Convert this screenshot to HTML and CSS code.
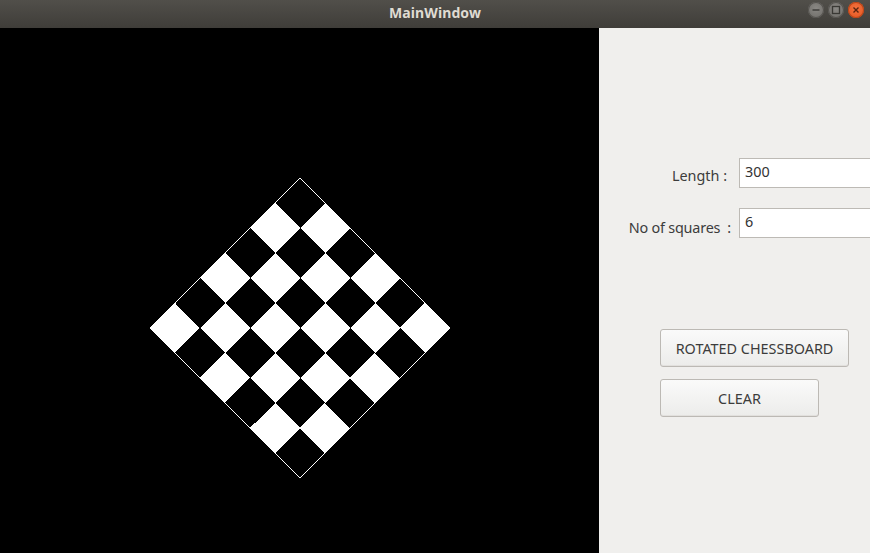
FILE: index.html
```html
<!DOCTYPE html>
<html>
<head>
<meta charset="utf-8">
<link rel="stylesheet" href="styles.css">
</head>
<body>
<div class="window">
  <div class="titlebar">
    <span class="title">MainWindow</span>
    <div class="controls">
      <span class="ctl ctl-min"><svg width="16" height="16" viewBox="0 0 16 16"><line x1="4.5" y1="8" x2="11.5" y2="8" stroke="#3a3935" stroke-width="1.4"/></svg></span>
      <span class="ctl ctl-max"><svg width="16" height="16" viewBox="0 0 16 16"><rect x="4.5" y="4.5" width="7" height="7" fill="none" stroke="#3a3935" stroke-width="1.3"/></svg></span>
      <span class="ctl ctl-close"><svg width="16" height="16" viewBox="0 0 16 16"><path d="M5.5 5.5 L10.5 10.5 M10.5 5.5 L5.5 10.5" stroke="#5a2410" stroke-width="1.4"/></svg></span>
    </div>
  </div>
  <div class="main">
    <div class="canvas">
      <svg id="board" width="599" height="525" viewBox="0 0 599 525" shape-rendering="crispEdges"></svg>
    </div>
    <div class="panel">
      <div class="form">
        <div class="row">
          <label class="lbl">Length :</label>
          <div class="field">300</div>
        </div>
        <div class="row">
          <label class="lbl lbl-low">No of squares&nbsp;&nbsp;:</label>
          <div class="field">6</div>
        </div>
      </div>
      <div class="buttons">
        <button class="btn btn-wide">ROTATED CHESSBOARD</button>
        <button class="btn btn-narrow">CLEAR</button>
      </div>
    </div>
  </div>
</div>
<script>
(function(){
  var svg = document.getElementById('board');
  var ns = 'http://www.w3.org/2000/svg';
  var n = 6, L = 300, s = L / Math.SQRT2 / n;
  var g = document.createElementNS(ns, 'g');
  g.setAttribute('transform', 'translate(300,150) rotate(45)');
  for (var i = 0; i < n; i++) {
    for (var j = 0; j < n; j++) {
      if ((i + j) % 2 === 1) {
        var r = document.createElementNS(ns, 'rect');
        r.setAttribute('x', j * s);
        r.setAttribute('y', i * s);
        r.setAttribute('width', s);
        r.setAttribute('height', s);
        r.setAttribute('fill', '#fff');
        g.appendChild(r);
      }
    }
  }
  var o = document.createElementNS(ns, 'rect');
  o.setAttribute('x', 0); o.setAttribute('y', 0);
  o.setAttribute('width', s * n); o.setAttribute('height', s * n);
  o.setAttribute('fill', 'none'); o.setAttribute('stroke', '#fff');
  o.setAttribute('stroke-width', '1');
  g.appendChild(o);
  svg.appendChild(g);
})();
</script>
</body>
</html>
```

FILE: styles.css
```css
* { box-sizing: border-box; }
html, body { margin: 0; padding: 0; }
body {
  width: 870px;
  height: 553px;
  overflow: hidden;
  font-family: "Noto Sans", "DejaVu Sans", sans-serif;
  background: #efeeec;
}
.window {
  display: flex;
  flex-direction: column;
  width: 870px;
  height: 553px;
}
.titlebar {
  position: relative;
  height: 28px;
  flex: none;
  background: linear-gradient(#514f4a, #3f3d39);
  display: flex;
  align-items: center;
  justify-content: center;
}
.title {
  color: #dfdbd2;
  font-weight: bold;
  font-size: 14px;
  letter-spacing: 0.1px;
  margin-top: -4px;
}
.controls {
  position: absolute;
  right: 6px;
  top: 2px;
  display: flex;
  gap: 4px;
}
.ctl {
  width: 16px;
  height: 16px;
  border-radius: 50%;
  display: flex;
}
.ctl-min, .ctl-max {
  background: radial-gradient(circle at 50% 40%, #8a8884, #6c6a66);
  box-shadow: inset 0 0 0 1px #55534f;
}
.ctl-close {
  background: radial-gradient(circle at 50% 40%, #f5733f, #e0521e);
  box-shadow: inset 0 0 0 1px #b8461a;
}
.main {
  flex: 1;
  display: flex;
}
.canvas {
  width: 599px;
  flex: none;
  background: #000;
}
.canvas svg { display: block; }
.panel {
  flex: 1;
  background: #f0efed;
  padding-top: 130px;
  overflow: hidden;
}
.form {
  display: flex;
  flex-direction: column;
  gap: 20px;
}
.row {
  display: flex;
  align-items: center;
  gap: 8px;
  height: 30px;
}
.lbl {
  width: 132px;
  flex: none;
  text-align: right;
  font-size: 14.4px;
  color: #3c3c3c;
  padding-right: 4px;
  margin-top: 5px;
  white-space: nowrap;
}
.lbl-low {
  margin-top: 9px;
  padding-right: 0;
  letter-spacing: -0.2px;
}
.field {
  width: 150px;
  height: 30px;
  flex: none;
  background: #fff;
  border: 1px solid #bdbab5;
  font-size: 14.4px;
  color: #333;
  padding: 3px 0 0 5px;
  line-height: 19px;
}
.buttons {
  margin-top: 91px;
  padding-left: 61px;
  display: flex;
  flex-direction: column;
  align-items: flex-start;
  gap: 12px;
}
.btn {
  height: 38px;
  border: 1px solid #bcb9b4;
  border-radius: 3px;
  background: linear-gradient(#fafafa, #ececea);
  box-shadow: inset 0 -1px 0 #e2e0dd;
  font-family: "Noto Sans", "DejaVu Sans", sans-serif;
  font-size: 14.4px;
  color: #3c3c3c;
  padding: 0;
}
.btn-wide { width: 189px; }
.btn-narrow { width: 159px; }
```
